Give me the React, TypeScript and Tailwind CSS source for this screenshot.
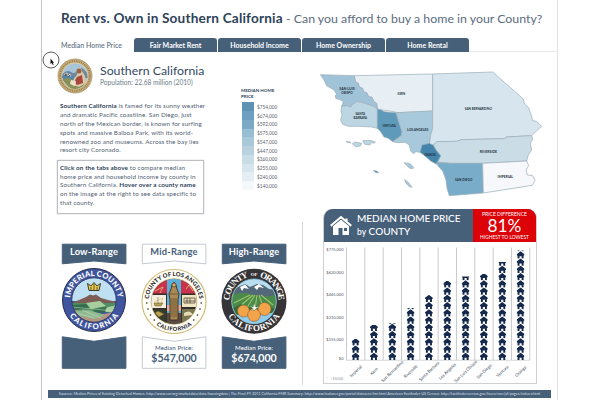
import React from "react";

const tabs = ["Fair Market Rent", "Household Income", "Home Ownership", "Home Rental"];

const legend: [string, string][] = [
  ["$754,000", "bg-[#5e92b5]"],
  ["$674,000", "bg-[#6d9fc0]"],
  ["$592,000", "bg-[#7ba9c6]"],
  ["$575,000", "bg-[#98bed3]"],
  ["$547,000", "bg-[#a9c8da]"],
  ["$447,000", "bg-[#b9d1de]"],
  ["$360,000", "bg-[#c8dde6]"],
  ["$255,000", "bg-[#d7e6ee]"],
  ["$240,000", "bg-[#e6eef5]"],
  ["$140,000", "bg-[#f5f8fb]"],
];

const counties: { d: string; fill: string }[] = [
  { fill: "#e7eff5", d: "M133 32L368 27V138L265 143L240 138L215 135L202 132L200 115L192 110L186 97L176 95L170 83L160 80L158 70L148 66L145 55L136 50Z" },
  { fill: "#a0c3d7", d: "M31 29L133 32L136 50L145 55L148 66L158 70L160 80L170 83L176 95L186 97L192 110L200 115L202 132L190 124L165 115L142 109L125 120L123 126L112 122L95 124L100 110L88 103L78 101L75 92L80 88L72 75L60 68L50 62L42 45Z" },
  { fill: "#bdd6e3", d: "M95 124L112 122L123 126L125 120L142 109L165 115L190 124L202 132V190L185 186L150 184L115 184L98 178L92 165L96 150L93 138Z" },
  { fill: "#5f9abb", d: "M202 132L215 135L222 140L258 143L276 200L274 212L248 230L235 220L222 216L212 200L202 190Z" },
  { fill: "#a8c9db", d: "M258 143L368 138V190L362 210L358 235L345 238L336 250L330 262L318 260L310 266L302 258L298 240L285 232L262 233L248 230L274 212L276 200Z" },
  { fill: "#d7e6ee", d: "M368 27L548 21L640 102L643 117L655 127L662 145L668 167L680 169L695 184L672 205L665 212L588 216L585 221L455 224L440 229L380 230L370 241L358 238L362 210L368 190Z" },
  { fill: "#cadde7", d: "M380 230L440 229L455 224L585 221L588 216L665 212L668 222L661 235L665 255L655 270L650 288L518 295H420L382 292L392 272L378 255L370 241Z" },
  { fill: "#4385ac", d: "M336 240L358 235L370 241L378 255L392 272L382 292L380 298L362 288L345 273L330 262Z" },
  { fill: "#78acc8", d: "M380 292L420 295H518L520 384L418 392L411 370L408 345L398 318L384 303Z" },
  { fill: "#f6f8fb", d: "M518 295L650 288L656 302L648 316L652 330L668 332L675 346L667 361L520 384Z" },
  { fill: "#bdd6e3", d: "M108 229L121 231L123 234L112 232ZM127 236L135 231L155 235L151 243L137 245ZM158 227L180 226L196 231L191 235L184 232L180 240L164 238Z" },
  { fill: "#4385ac", d: "M190 316L202 319L206 323L198 323Z" },
  { fill: "#a8c9db", d: "M282 293L300 296L311 307L309 311L298 309ZM284 344L295 352L306 367L298 365L288 355Z" },
];

const countyNames: [number, number, string, number][] = [
  [111, 76, "SAN LUIS", 11], [111, 88, "OBISPO", 11], [151, 149, "SANTA", 11], [151, 161, "BARBARA", 11],
  [237, 187, "VENTURA", 13], [323, 199, "LOS ANGELES", 13], [274, 91, "KERN", 13], [505, 135, "SAN BERNARDINO", 13],
  [535, 265, "RIVERSIDE", 13], [360, 272, "ORANGE", 13], [461, 348, "SAN DIEGO", 13], [586, 339, "IMPERIAL", 13],
];

const bars: [string, number][] = [
  ["Imperial", 21], ["Kern", 35], ["San Bernardino", 37], ["Riverside", 52], ["Santa Barbara", 65],
  ["Los Angeles", 79], ["San Luis Obispo", 83.5], ["San Diego", 86], ["Ventura", 98], ["Orange", 109.5],
];

function StateSeal() {
  return (
    <svg className="size-[36px] shrink-0" viewBox="0 0 36 36">
      <circle cx="18" cy="18" r="17" fill="#c7ad79" stroke="#a48b5d" strokeWidth=".7" />
      <circle cx="18" cy="18" r="14.8" fill="none" stroke="#8e754a" strokeWidth="2" strokeDasharray=".7 1.1" />
      <circle cx="18" cy="18" r="13" fill="#a7c4d9" stroke="#e5d6ac" strokeWidth=".7" />
      <path d="M5.5 16Q10 11 14 14T21 12T30 15L30.7 20H5.2Z" fill="#71889d" />
      <path d="M5 18H24V24H7Z" fill="#5585ab" />
      <path d="M5.4 21L12 20L17 23L29 24Q25 31 18 31T5.4 21Z" fill="#879056" />
      <path d="M21 10Q24 9 25 13L28 18L29 25L22 29L15 27L17 20L20 17Z" fill="#d9c8a7" />
      <path d="M20 19L25 17L26 25L20 27L17 24Z" fill="#a9473d" />
      <circle cx="22" cy="13" r="2.5" fill="#9b623f" />
      <path d="M14 22L19 23L18 28L13 26Z" fill="#ece3cf" />
      <path d="M7 17L10 15V18M11 18L13 16V19" stroke="#f6f1df" strokeWidth=".8" />
    </svg>
  );
}

function ImperialSeal() {
  return (
    <svg className="h-[68px] w-[66px]" viewBox="0 0 66 68">
      <defs>
        <path id="it" d="M9 34a24 24 0 0 1 48 0" />
        <path id="ib" d="M4 34a29 29 0 0 0 58 0" />
        <clipPath id="ic"><circle cx="33" cy="34" r="22.2" /></clipPath>
      </defs>
      <circle cx="33" cy="34" r="31.5" fill="#3f55a0" stroke="#252b45" strokeWidth="1" />
      <g clipPath="url(#ic)">
        <path fill="#bfe0f2" d="M10 10h46v25H10z" />
        <path fill="#7f5d57" d="M10 37L18 34L25 31L29 28.5L32 29.5L35 28.5L40 32L47 34L56 36V41H10Z" />
        <path fill="#4f8e61" d="M10 37H56V46H10Z" />
        <path fill="#a8cf9e" d="M25 37L39 35L45 40L30 43ZM43 42L56 39V47L45 46Z" />
        <path fill="#326d50" d="M12 39L25 38L28 42L14 44ZM34 43L46 41L43 47L31 46Z" />
        <path fill="#b49583" d="M10 43L24 46L42 48L56 46V59H10Z" />
        <path fill="#8fba91" d="M13 45L28 44L44 49L35 53L18 50Z" />
        <path d="M15 47L33 52M21 44L40 52M10 41L55 45" stroke="#d6dfc0" strokeWidth=".5" />
      </g>
      <circle cx="33" cy="34" r="22.2" fill="none" stroke="#202d54" strokeWidth=".8" />
      <path d="M28 24.5L26.5 17.5L30 20L33 16.5L36 20L39.5 17.5L38 24.5Z" fill="#e9cb45" stroke="#3c3b31" strokeWidth="1" />
      <path d="M33 18V24M30 21V24M36 21V24" stroke="#3c3b31" strokeWidth=".8" />
      <text className="font-['Lato',sans-serif]" fontSize="7.6" fontWeight="900" fill="#fff" textAnchor="middle">
        <textPath href="#it" startOffset="50%" textLength="70">IMPERIAL COUNTY</textPath>
      </text>
      <text className="font-['Lato',sans-serif]" fontSize="7.6" fontWeight="900" fill="#fff" textAnchor="middle">
        <textPath href="#ib" startOffset="50%" textLength="58">CALIFORNIA</textPath>
      </text>
    </svg>
  );
}

function LosAngelesSeal() {
  return (
    <svg className="h-[68px] w-[66px]" viewBox="0 0 66 68">
      <defs>
        <path id="lt" d="M7.6 35.5a25.4 25.4 0 0 1 50.8 0" />
        <path id="lb" d="M3.6 35.5a29.4 29.4 0 0 0 58.8 0" />
        <clipPath id="lc"><circle cx="33" cy="35.5" r="22.8" /></clipPath>
      </defs>
      <circle cx="33" cy="35.5" r="32" fill="#fffef9" stroke="#cfbd79" strokeWidth="1.2" />
      <g clipPath="url(#lc)">
        <path fill="#332e28" d="M10 10h46v50H10z" />
        <path fill="#c8324a" d="M10 12H26V27.5H10ZM40 12H56V27.5H40Z" />
        <path fill="#f4eee0" d="M10 29H25V42H10Z" />
        <path fill="#f1e6c4" d="M41 29H56V41H41Z" />
        <path fill="#373c2b" d="M10 43.5H25V59H10Z" />
        <path fill="#7c7750" d="M41 43H56V59H41Z" />
        <path fill="#5dafd7" d="M26 12H40V48H26Z" />
        <path fill="#e7a7a7" d="M26 39H40V45H26Z" />
        <path fill="#5a4a43" d="M26 47H40V59H26Z" />
      </g>
      <path d="M31 19Q33 14 35 19L36 23L38 28L37 34V54H29V34L28 28L30 23Z" fill="#a98955" stroke="#40301d" strokeWidth=".9" />
      <path d="M31 32V51M33 32V52M35 32V51M29 28H37" stroke="#5f4528" strokeWidth=".7" />
      <circle cx="33" cy="19" r="2" fill="#e0b36e" stroke="#493018" strokeWidth=".7" />
      <path d="M14 25L22 21L19 27M45 23L48 19L52 25M13 36L22 32L19 39L13 39" fill="none" stroke="#dfc778" strokeWidth=".8" />
      <path d="M43 37V32H54V37ZM44 35H54M46 32V37M49 32V37" fill="none" stroke="#554735" strokeWidth=".8" />
      <path d="M13 37H22L20 40H14ZM17 31V38M14 47L17 45L23 48L18 51Z" fill="#b9a34f" stroke="#6b5a27" strokeWidth=".5" />
      <path d="M43 47Q49 43 52 49L43 50Z" fill="#e4dcb5" />
      <circle cx="33" cy="35.5" r="23" fill="none" stroke="#cfbd79" strokeWidth=".6" />
      <text className="font-['Lato',sans-serif]" fontSize="5.9" fontWeight="900" fill="#29251f" textAnchor="middle">
        <textPath href="#lt" startOffset="50%" textLength="74">COUNTY OF LOS ANGELES</textPath>
      </text>
      <text className="font-['Lato',sans-serif]" fontSize="5.6" fontWeight="900" fill="#29251f" textAnchor="middle">
        <textPath href="#lb" startOffset="50%" textLength="38">CALIFORNIA</textPath>
      </text>
      <g fill="#29251f">
        <circle cx="5.8" cy="37" r=".8" /><circle cx="7" cy="43" r=".8" /><circle cx="9.5" cy="49" r=".8" /><circle cx="13.3" cy="54" r=".8" />
        <circle cx="60.2" cy="37" r=".8" /><circle cx="59" cy="43" r=".8" /><circle cx="56.5" cy="49" r=".8" /><circle cx="52.7" cy="54" r=".8" />
      </g>
    </svg>
  );
}

function OrangeSeal() {
  return (
    <svg className="h-[68px] w-[66px]" viewBox="0 0 66 68">
      <defs>
        <path id="ot" d="M8.4 35.3a24.6 24.6 0 0 1 49.2 0" />
        <path id="ob" d="M3.2 35.3a29.8 29.8 0 0 0 59.6 0" />
        <clipPath id="oc"><circle cx="33" cy="35.3" r="22.3" /></clipPath>
      </defs>
      <circle cx="33" cy="35.3" r="32.5" fill="#363436" />
      <g clipPath="url(#oc)">
        <path fill="#b9def0" d="M10 10h46v50H10z" />
        <path fill="#536879" d="M10 25L19 20L24 18L29 21L36 18L42 19L48 23L56 24V31H10Z" />
        <path fill="#fff" d="M19 21L24 18.5L28 23L23 22L21 25ZM33 21L38 18L43 22L38 21L36 24Z" />
        <path fill="#4c8a4c" d="M10 29Q21 25 33 29T56 28V45H10Z" />
        <path d="M13 37L29 29M18 41L32 29M25 43L34 29M34 43L36 29M43 43L38 29M52 39L40 29" stroke="#9bc767" strokeWidth="1.1" />
        <path fill="#8dcced" d="M10 44H56V60H10Z" />
        <path fill="#356d3a" d="M10 43L20 38L27 42L34 40L43 39L56 43L51 47L14 49Z" />
      </g>
      <circle cx="33" cy="35.3" r="22.3" fill="none" stroke="#8ccbe6" strokeWidth=".8" />
      <g fill="#f3a349" stroke="#915a28" strokeWidth=".6">
        <circle cx="22.5" cy="45" r="6" /><circle cx="43.5" cy="43" r="6.5" /><circle cx="33" cy="49" r="6.4" />
      </g>
      <path d="M28 39L32 41L33 37L35 41L39 40L35 43L33 45L31 42Z" fill="#e9f0de" stroke="#40734b" strokeWidth=".5" />
      <text className="font-['Liberation_Serif',serif]" fontSize="9" fontWeight="700" fill="#fff" textAnchor="middle">
        <textPath href="#ot" startOffset="22%" textLength="32">COUNTY</textPath>
      </text>
      <text className="font-['Liberation_Serif',serif]" x="33" y="9.6" fontSize="4.8" fontWeight="700" fill="#fff" textAnchor="middle">OF</text>
      <text className="font-['Liberation_Serif',serif]" fontSize="9" fontWeight="700" fill="#fff" textAnchor="middle">
        <textPath href="#ot" startOffset="78%" textLength="32">ORANGE</textPath>
      </text>
      <text className="font-['Liberation_Serif',serif]" fontSize="9" fontWeight="700" fill="#fff" textAnchor="middle">
        <textPath href="#ob" startOffset="50%" textLength="63">CALIFORNIA</textPath>
      </text>
    </svg>
  );
}

function Range({ title, price, light, children }: { title: string; price?: string; light?: boolean; children: React.ReactNode }) {
  const fill = light ? "#fff" : "#46607a";
  const stroke = light ? "#c5cad0" : "#46607a";
  return (
    <div className="flex w-[66px] flex-col items-center">
      <div className="relative h-[22px] w-[66px]">
        <svg className="absolute inset-0" width="66" height="22"><path d="M1.3 1.2H64.9V20.8L33 18L1.3 20.8Z" fill={fill} stroke={stroke} strokeWidth="1" /></svg>
        <div className={"relative pt-[2px] text-center text-[9.3px] leading-[14px] font-bold tracking-[.2px] whitespace-nowrap " + (light ? "text-[#46607a]" : "text-white")}>{title}</div>
      </div>
      <div className="mt-[1px] h-[69px]">{children}</div>
      <div className="relative h-[34px] w-[66px]">
        <svg className="absolute inset-0" width="66" height="34"><path d="M1.3 1.8L33 6.3L64.9 1.8V33.3H1.3Z" fill={fill} stroke={stroke} strokeWidth="1" /></svg>
        {price && (
          <div className={"relative pt-[9px] text-center whitespace-nowrap " + (light ? "text-[#46607a]" : "text-white")}>
            <div className="text-[6.1px] leading-[8px] font-medium tracking-[.1px]">Median Price:</div>
            <div className="text-[10.6px] leading-[13px] font-bold">{price}</div>
          </div>
        )}
      </div>
    </div>
  );
}

function PriceChart() {
  const ticks: [string, number][] = [["$775,000", 251.2], ["$620,000", 273.7], ["$465,000", 296.2], ["$310,000", 318.7], ["$155,000", 341.2], ["$0", 360.3]];
  return (
    <svg className="block h-[141px] w-[213px]" viewBox="323.5 242 213 141">
      <defs>
        <symbol id="house" viewBox="0 0 22 22">
          <path d="M11 1L22 9V13H19.5V21H14V14.5H8V21H2.5V13H0V9Z" fill="#14294b" />
        </symbol>
        {bars.map(([n, h], i) => (
          <clipPath key={n} id={"c" + i}><rect x={346 + i * 18.33} y={360 - h} width="18" height={h} /></clipPath>
        ))}
      </defs>
      {Array.from({ length: 11 }, (_, i) => (
        <path key={i} d={`M${346 + i * 18.33} 247.5V360`} stroke="#c9cacc" strokeWidth="1" />
      ))}
      <path d="M345.5 360.2H529.5" stroke="#c9cacc" strokeWidth=".8" />
      {ticks.map(([t, y]) => (
        <text key={t} x="343" y={y} fontSize="4" textAnchor="end" fill="#50565f">{t}</text>
      ))}
      {bars.map(([n, h], i) => (
        <g key={n}>
          <g clipPath={`url(#c${i})`}>
            {Array.from({ length: 16 }, (_, k) => (
              <use key={k} href="#house" x={351.2 + i * 18.33} y={352.5 - k * 7.25} width="7.8" height="7.8" />
            ))}
          </g>
          <text transform={`translate(${356.3 + i * 18.33} 372.3) rotate(-44)`} textAnchor="middle" fontSize="4.3" fill="#3e4b5c">{n}</text>
        </g>
      ))}
      <text x="326" y="380.2" fontSize="2.8" fill="#8b929b">*</text>
      <text x="330" y="380.2" fontSize="2.8" fill="#8b929b">= $50,000</text>
    </svg>
  );
}

export default function App() {
  return (
    <div className="h-[400px] w-[600px] overflow-hidden bg-white font-['Lato',sans-serif] text-[#34495f]">
      <div className="relative ml-[41px] flex h-[400px] w-[517px] flex-col border-x border-l-[#c4c4c4] border-r-[#e2e2e2]">
        <h1 className="h-[38px] pt-[9px] pl-[19px] text-[14px] leading-[18px] whitespace-nowrap">
          <span className="inline-block w-[225px] text-[13.6px] font-bold tracking-[.19px] text-[#2d4259]">Rent vs. Own in Southern California</span>
          <span className="text-[12.35px] text-[#5a6c7e]">- Can you afford to buy a home in your County?</span>
        </h1>
        <nav className="flex h-[14px]">
          <div className="w-[92px] pl-[19px] text-[7px] leading-[14px] font-medium whitespace-nowrap text-[#5a6c7e]">Median Home Price</div>
          <div className="flex gap-px">
            {tabs.map((t) => (
              <div key={t} className="h-[14px] w-[83px] rounded-t-[3px] bg-[#46607a] text-center text-[7px] leading-[14px] font-bold text-white">{t}</div>
            ))}
          </div>
          <div className="flex-1 border-b border-[#e9e9e9]" />
        </nav>
        <section className="flex h-[170px]">
          <div className="w-[199px] pl-[15px]">
            <div className="flex h-[48px] items-start gap-[7px] pt-[6px]">
              <StateSeal />
              <div className="pt-[5px] whitespace-nowrap">
                <div className="text-[12.3px] leading-[15px]">Southern California</div>
                <div className="text-[6.6px] leading-[9px] text-[#6d7b89]">Population: 22.68 million (2010)</div>
              </div>
            </div>
            <p className="pt-[2px] pl-[3px] text-[6.3px] leading-[8.87px] tracking-[.13px] whitespace-nowrap text-[#536272]">
              <b className="text-[#2d4259]">Southern California</b> is famed for its sunny weather<br />and dramatic Pacific coastline. San Diego, just<br />north of the Mexican border, is known for surfing<br />spots and massive Balboa Park, with its world-<br />renowned zoo and museums. Across the bay lies<br />resort city Coronado.
            </p>
            <p className="mt-[4.5px] h-[54px] w-[147px] border border-[#bcbfc3] pt-[3px] pl-[2px] text-[6.3px] leading-[8.8px] tracking-[.13px] whitespace-nowrap text-[#536272] shadow-[0_0_1px_#aaa]">
              <b className="text-[#2d4259]">Click on the tabs above</b> to compare median<br />home price and household income by county in<br />Southern California. <b className="text-[#2d4259]">Hover over a county name</b><br />on the image at the right to see data specific to<br />that county.
            </p>
          </div>
          <div className="w-[68px] pt-[36px] text-[4.5px] text-[#59616b]">
            <div className="leading-[6px] font-bold text-[#2d4259]">MEDIAN HOME<br />PRICE</div>
            <div className="mt-[2.4px] pl-px">
              {legend.map(([label, colour]) => (
                <div key={label} className="flex h-[8.75px] items-center gap-[3px]">
                  <span className={"h-full w-[12px] " + colour} />
                  <span className="text-[4.7px] leading-[8px]">{label}</span>
                </div>
              ))}
            </div>
          </div>
          <svg className="mt-[13px] h-[135px] w-[240px]" viewBox="309 65 240 135">
            <g transform="translate(310 65) scale(.33333)">
              {counties.map((c) => (
                <path key={c.d} d={c.d} fill={c.fill} stroke="#9eafba" strokeWidth="2.2" strokeLinejoin="round" />
              ))}
              {countyNames.map(([x, y, n, size]) => (
                <text key={n} x={x} y={y} fontSize={size} fontWeight="700" textAnchor="middle" fill="#26343d" textLength={n.length * 5.8} lengthAdjust="spacingAndGlyphs">{n}</text>
              ))}
            </g>
          </svg>
        </section>
        <section className="flex h-[168px]">
          <div className="mr-[20px] flex h-[163px] w-[261px] gap-[14px] border-r border-[#d5d5d5] pt-[21px] pl-[19px]">
            <Range title="Low-Range"><ImperialSeal /></Range>
            <Range title="Mid-Range" price="$547,000" light><LosAngelesSeal /></Range>
            <Range title="High-Range" price="$674,000"><OrangeSeal /></Range>
          </div>
          <div className="mt-[-13px] h-[175px] w-[214px] overflow-hidden rounded-t-[9px] border border-t-0 border-[#cfd0d2]">
            <div className="flex h-[33px] bg-[#46607a] text-white">
              <svg className="mt-[6px] ml-[6px] h-[21px] w-[22px] shrink-0" viewBox="0 0 22 21">
                <path d="M3 11L11 4.5L19 11V20H12.5V13H8.5V20H3Z" fill="#fff" />
                <path d="M.8 10.8L11 2.2L21.2 10.8M16.5 3.5V6" fill="none" stroke="#fff" strokeWidth="2.2" />
                <path d="M2.5 11L11 4L19.5 11" fill="none" stroke="#46607a" strokeWidth=".7" />
                <path d="M14 13H17V16H14Z" fill="#46607a" />
              </svg>
              <div className="w-[121px] pt-[3px] pl-[5px] text-[10px] leading-[12.5px] font-medium whitespace-nowrap">
                MEDIAN HOME PRICE<br /><span className="text-[8.5px]">by</span> COUNTY
              </div>
              <div className="flex flex-1 flex-col items-center bg-[#dd0208] pt-[2px] whitespace-nowrap">
                <span className="text-[5px] leading-[6px]">PRICE DIFFERENCE</span>
                <span className="text-[17.3px] leading-[17px]">81%</span>
                <span className="text-[4.85px] leading-[6px]">HIGHEST TO LOWEST</span>
              </div>
            </div>
            <PriceChart />
          </div>
        </section>
        <footer className="mx-[6px] flex h-[8px] items-center justify-center bg-[#46607a] text-[3.75px] leading-[8px] whitespace-nowrap text-[#d7dfe6]">
          Sources: Median Prices of Existing Detached Homes: http://www.car.org/marketdata/data/housingdata | The Final FY 2011 California FMR Summary: http://www.huduser.gov/portal/datasets/fmr.html American Factfinder US Census: http://factfinder.census.gov/faces/nav/jsf/pages/index.xhtml
        </footer>
        <svg className="absolute top-[51px] left-0 size-[18px]" viewBox="0 0 18 18">
          <circle cx="9" cy="9" r="8" fill="#fff" stroke="#4a4a4a" strokeWidth=".9" />
          <path d="M8.5 7.5V13L9.8 12L10.8 14L11.7 13.5L10.8 11.8H12Z" fill="#111" />
        </svg>
      </div>
    </div>
  );
}
